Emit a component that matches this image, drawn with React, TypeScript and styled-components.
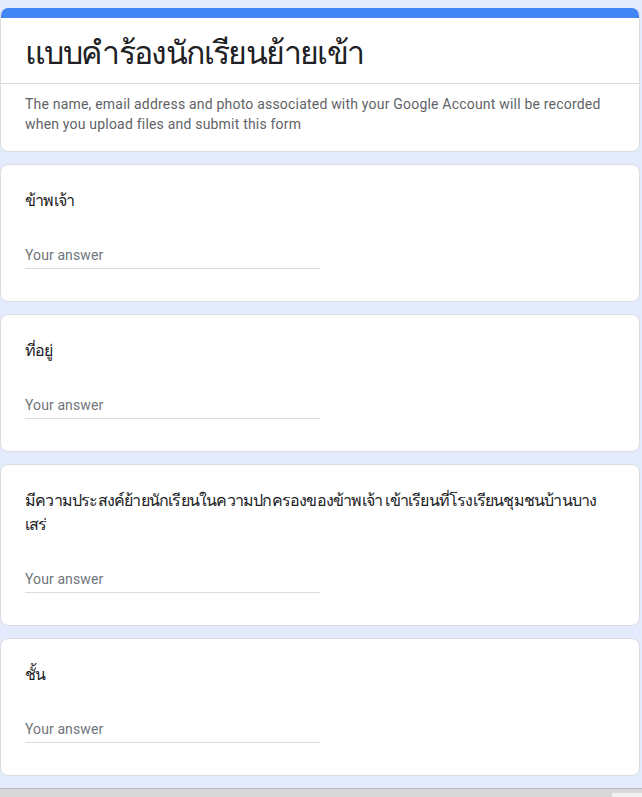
import styled, { createGlobalStyle } from 'styled-components';

const GlobalStyle = createGlobalStyle`
  html, body {
    margin: 0;
    padding: 0;
    background: #e3ebfc;
  }
  body {
    font-family: Roboto, "Noto Sans", Arial, sans-serif;
  }
`

const Page = styled.div`
    width: 640px;
    padding-top: 8px;
    display: flex;
    flex-direction: column;
    gap: 12px;
`

const Card = styled.div`
    background: #ffffff;
    border: 1px solid #dadce0;
    border-radius: 8px;
    overflow: hidden;
`

const HeaderCard = styled(Card)`
    border-top: none;
`

const ThemeBar = styled.div`
    height: 10px;
    background: #4285f4;
`

const Title = styled.h1`
    margin: 0;
    padding: 15px 24px 10px;
    font-size: 32px;
    line-height: 40px;
    font-weight: 500;
    letter-spacing: -1.6px;
    color: #202124;
    border-bottom: 1px solid #dadce0;
`

const Notice = styled.div`
    padding: 10px 24px 17px;
    font-size: 14px;
    line-height: 20px;
    letter-spacing: 0.2px;
    color: #5f6368;
`

const QuestionCard = styled(Card)`
    padding: 24px;
`

const QuestionText = styled.div`
    font-size: 16px;
    line-height: 24px;
    letter-spacing: -0.8px;
    color: #202124;
`

const AnswerField = styled.div`
    width: 295px;
    margin-top: 28px;
    margin-bottom: 8px;
    height: 27px;
    line-height: 28px;
    font-size: 14px;
    letter-spacing: 0.1px;
    color: #70757a;
    border-bottom: 1px solid #dadce0;
`

const BottomBar = styled.div`
    position: fixed;
    left: 0;
    right: 0;
    bottom: 0;
    height: 8px;
    background: #d9d9d9;
    border-top: 1px solid #b8b8b8;
`

const BottomTab = styled.div`
    position: absolute;
    right: 0;
    bottom: 0;
    width: 30px;
    height: 4px;
    background: #f1f1f1;
    border-radius: 2px 0 0 0;
`

const questions = [
    'ข้าพเจ้า',
    'ที่อยู่',
    'มีความประสงค์ย้ายนักเรียนในความปกครองของข้าพเจ้า เข้าเรียนที่โรงเรียนชุมชนบ้านบางเสร่',
    'ชั้น',
]

export default function App() {
    return (
        <>
            <GlobalStyle />
            <Page>
                <HeaderCard>
                    <ThemeBar />
                    <Title>แบบคำร้องนักเรียนย้ายเข้า</Title>
                    <Notice>
                        The name, email address and photo associated with your Google Account will be recorded
                        when you upload files and submit this form
                    </Notice>
                </HeaderCard>
                {questions.map((q) => (
                    <QuestionCard key={q}>
                        <QuestionText>{q}</QuestionText>
                        <AnswerField>Your answer</AnswerField>
                    </QuestionCard>
                ))}
            </Page>
            <BottomBar>
                <BottomTab />
            </BottomBar>
        </>
    )
}
